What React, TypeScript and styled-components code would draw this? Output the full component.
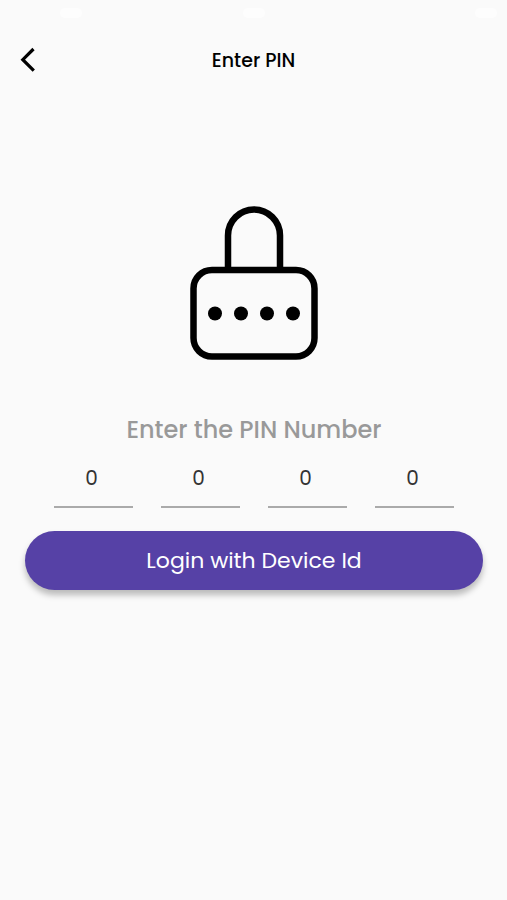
import React, { useState } from "react";
import styled, { createGlobalStyle } from "styled-components";

const GlobalStyle = createGlobalStyle`
  *, *::before, *::after { box-sizing: border-box; }
  body {
    margin: 0;
    background: #fafafa;
    color: #000;
    font-family: Poppins, Inter, sans-serif;
  }
`;

const Screen = styled.div`
  min-height: 100vh;
  display: flex;
  flex-direction: column;
  background: #fafafa;
`;

const StatusBar = styled.div`
  height: 32px;
  padding: 0 10px 6px;
  display: grid;
  grid-template-columns: 1fr auto 1fr;
  align-items: center;
`;

const StatusMark = styled.span<{ $side?: "start" | "end" }>`
  width: 22px;
  height: 10px;
  margin-left: ${({ $side }) => ($side === "start" ? "50px" : "0")};
  border-radius: 5px;
  background: #fdfdfd;
  justify-self: ${({ $side }) => $side ?? "center"};
`;

const Header = styled.header`
  height: 56px;
  padding: 0 12px;
  display: grid;
  grid-template-columns: 32px 1fr 32px;
  align-items: center;
`;

const BackButton = styled.button`
  width: 32px;
  height: 32px;
  padding: 0;
  border: 0;
  background: none;
  color: #000;
  cursor: pointer;

  svg { display: block; }
`;

const Title = styled.h1`
  margin: 0;
  padding-top: 2px;
  text-align: center;
  font-size: 19px;
  font-weight: 500;
  line-height: 28px;
`;

const Form = styled.form`
  padding: 116px 24px 24px 25px;
  display: flex;
  flex-direction: column;
  align-items: center;
`;

const LockIcon = styled.svg`
  display: block;
  width: 132px;
  height: 160px;
`;

const Prompt = styled.h2`
  margin: 46px 0 0;
  color: #999;
  text-align: center;
  font-size: 24px;
  font-weight: 500;
  line-height: 40px;
`;

const PinRow = styled.div`
  width: 100%;
  padding: 0 29px;
  display: grid;
  grid-template-columns: repeat(4, 1fr);
  gap: 28px;
`;

const PinInput = styled.input`
  width: 100%;
  min-width: 0;
  height: 58px;
  padding: 0 4px 0 0;
  border: 0;
  border-bottom: 2px solid #aaa;
  border-radius: 0;
  outline: 0;
  background: transparent;
  color: #333;
  font: 400 20px/28px Poppins, Inter, sans-serif;
  text-align: center;

  &:focus { border-bottom-color: #5641a6; }
`;

const LoginButton = styled.button`
  width: 100%;
  height: 59px;
  margin-top: 23px;
  padding: 0;
  border: 0;
  border-radius: 30px;
  background: #5641a6;
  box-shadow: 0 5px 6px rgba(0, 0, 0, 0.26);
  color: #fff;
  font: 400 22px/32px Poppins, Inter, sans-serif;
  cursor: pointer;
`;

const DOTS = [27, 53, 79, 105];

export default function App() {
  const [pin, setPin] = useState(["0", "0", "0", "0"]);

  const changeDigit = (index: number, value: string) =>
    setPin(pin.map((digit, i) => (i === index ? value.replace(/\D/g, "") : digit)));

  return (
    <>
      <GlobalStyle />
      <Screen>
        <StatusBar aria-hidden="true">
          <StatusMark $side="start" />
          <StatusMark />
          <StatusMark $side="end" />
        </StatusBar>
        <Header>
          <BackButton type="button" aria-label="Back">
            <svg width="32" height="32" viewBox="0 0 32 32" fill="none" stroke="currentColor" strokeWidth="3.200">
              <path d="M21.500 5 10.800 15.700l11 11" />
            </svg>
          </BackButton>
          <Title>Enter PIN</Title>
        </Header>
        <Form onSubmit={(event) => event.preventDefault()}>
          <LockIcon viewBox="0 0 132 160" fill="none" aria-hidden="true">
            <path d="M40 66V31.500a26 26 0 0 1 52 0V66" stroke="#000" strokeWidth="6.500" />
            <rect x="5.500" y="66" width="121" height="86.500" rx="18.500" stroke="#000" strokeWidth="6.500" />
            {DOTS.map((x) => (
              <circle key={x} cx={x} cy="109.500" r="7" fill="#000" />
            ))}
          </LockIcon>
          <Prompt>Enter the PIN Number</Prompt>
          <PinRow>
            {pin.map((digit, index) => (
              <PinInput
                key={index}
                aria-label={`PIN digit ${index + 1}`}
                inputMode="numeric"
                maxLength={1}
                value={digit}
                onChange={(event) => changeDigit(index, event.target.value)}
              />
            ))}
          </PinRow>
          <LoginButton type="submit">Login with Device Id</LoginButton>
        </Form>
      </Screen>
    </>
  );
}
